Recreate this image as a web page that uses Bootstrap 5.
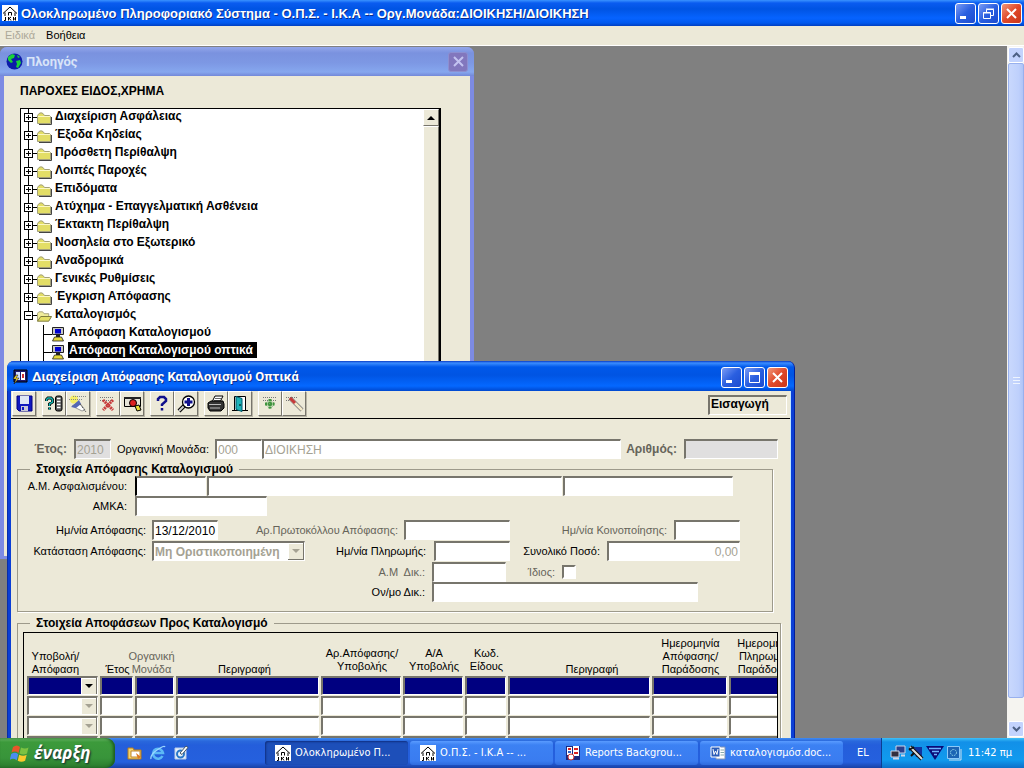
<!DOCTYPE html>
<html lang="el">
<head>
<meta charset="utf-8">
<meta name="viewport" content="width=device-width, initial-scale=1">
<title>Ολοκληρωμένο Πληροφοριακό Σύστημα</title>
<link href="https://cdn.jsdelivr.net/npm/bootstrap@5.3.0/dist/css/bootstrap.min.css" rel="stylesheet">
<style>
:root{--face:#ece9d8;--dark:#77756c}
body{font-family:"Liberation Sans",Arial,sans-serif;font-size:11px;line-height:13px;color:#000;background:#808080}
button{padding:0;border:0}
svg{display:block;flex:none}
.app-title{height:26px;padding:0 2px 0 2px;gap:3px;background:linear-gradient(#3a93ff 0,#0a5cf0 3px,#0054e3 9px,#0663ff 18px,#0058ee 23px,#003fc0 26px);color:#fff;font-size:13px;font-weight:700;text-shadow:1px 1px #0a2d8c}
.capbtn{width:21px;height:21px;border:1px solid #fff;border-radius:3px;background:linear-gradient(135deg,#7b9cf5,#2a5fe0 50%,#1c4bcf);display:flex;align-items:center;justify-content:center}
.capbtn.closer{background:linear-gradient(135deg,#f0977a,#e0492a 50%,#c8361a)}
.menubar{height:20px;background:var(--face);border-bottom:1px solid #fff;padding:0 5px 0 5px;gap:11px}
.menubar a{color:#000;text-decoration:none}
.menubar a.off{color:#aca899}
.workspace{background:#808080}
.vbar{width:17px;background:#f5f4f0;padding:1px 0 1px 1px}
.vbtn{width:16px;height:16px;border:1px solid #fff;border-radius:2px;background:#c3d3fd;display:flex;align-items:center;justify-content:center}
.vthumb{border:1px solid #98b0ee;border-radius:2px;background:linear-gradient(90deg,#c9d8fd,#bed0fc 70%,#b0c4f7);margin-bottom:23px}
.win{border-radius:7px 7px 0 0}
.nav-win{left:0;top:1px;width:474px;height:512px;background:#7d8be3;padding:0 4px 3px 4px}
.nav-title{height:29px;margin:0 -4px;padding:0 6px 0 6px;gap:3px;border-radius:7px 7px 0 0;background:linear-gradient(#93a6ea,#7a92df 6px,#7d98e4 16px,#86a7ee 25px,#7388d8 29px);color:#d8e4f8;font:700 13px/16px Roboto,sans-serif}
.nav-title .capbtn{border-color:#8d8fd0;background:#8277bd;width:20px;height:20px}
.nav-body{background:var(--face)}
.nav-head{font-size:12px;font-weight:700;padding:9px 16px 10px}
.tree{border:1px solid #000;border-right-width:2px;background:#fff;margin:0 29px 0 16px;font-size:12px;font-weight:700;line-height:16px}
.tree ul{padding:0;margin:0;list-style:none;background:linear-gradient(#000,#000) 7px 0/1px 100% no-repeat}
.tree li{height:18px;display:flex;align-items:center;padding-left:3px}
.tree li span{padding:0 1px;margin-left:2px;margin-top:-4px}
.tree li.leaf{padding-left:22px;border:0;background:linear-gradient(#000,#000) 22px 0/1px 100% no-repeat}
.tree .picked{background:#000;color:#fff;padding-right:4px}
.tbar{width:16px;background:#f3f1e7}
.rbtn{background:var(--face);border:1px solid;border-color:#fff var(--dark) var(--dark) #fff;display:flex;align-items:center;justify-content:center}
.tbar .rbtn{height:17px}
.form-win{left:7px;right:229px;top:315px;background:#0b3fd6;padding:0 4px 0 3px;border-left:1px solid #0a2ea8;border-right:1px solid #001f9c}
.form-title{height:30px;margin:0 -4px;padding:2px 6px 0 5px;gap:4px;border-radius:7px 7px 0 0;background:linear-gradient(#0a3cc4 0,#3b8dff 2px,#0058ea 6px,#0054e3 14px,#0468ff 25px,#0048cf 30px);color:#fff;font:700 13px/16px Roboto,sans-serif;text-shadow:1px 1px #0a2d8c}
.form-body{background:var(--face);border-right:1px solid #bfe6ff;margin-right:-1px}
.tools{height:28px;border-bottom:1px solid #000;padding:0 3px 0 1px}
.tool{width:24px;height:25px;background:var(--face);border:1px solid;border-color:#fff var(--dark) var(--dark) #fff;box-shadow:1px 1px #b8b5a6;display:flex;align-items:center;justify-content:center}
.mode{width:79px;height:20px;font-size:12px;font-weight:700;line-height:15px;padding-left:1px}
.sunk{border:solid;border-width:2px 1px 1px 2px;border-color:var(--dark) #fff #fff var(--dark);border-radius:0;background:#fff;height:20px;padding:0 1px;font-size:12px;line-height:14px;color:#000;outline:0;min-width:0;display:block;flex:none}
.sunk:disabled{opacity:1;color:#a5a293}
.row-f{display:flex;align-items:center;height:20px}
.row-f label{text-align:right;white-space:nowrap;flex:none}
.gray{color:#66645a}
fieldset.grp{border:1px solid #9d9a8b;box-shadow:1px 1px #fff;margin:4px 17px 0 6px;min-width:0}
.grp legend{float:none;width:auto;margin:0 0 0 12px;padding:0 6px;font-size:12px;font-weight:700;line-height:13px}
.w66{width:66px}.w71{width:71px}.w76{width:76px}
.l109{width:109px;margin-right:8px}.l128{width:128px;margin-right:6px}
.l407{width:407px;margin-right:7px}
.combo{appearance:none;background:url("data:image/svg+xml,%3Csvg xmlns='http://www.w3.org/2000/svg' width='16' height='17'%3E%3Cpath d='M0 0h16v17H0z' fill='%2377756c'/%3E%3Cpath d='M0 0h15v16H0z' fill='%23fff'/%3E%3Cpath d='M1 1h14v15H1z' fill='%23ece9d8'/%3E%3Cpath d='M4 6h8L8 10z' fill='%23a5a293'/%3E%3C/svg%3E") right 0 top 0 no-repeat #fff}
.combo.live{background-color:#000080;background-image:url("data:image/svg+xml,%3Csvg xmlns='http://www.w3.org/2000/svg' width='16' height='17'%3E%3Cpath d='M0 0h16v17H0z' fill='%2377756c'/%3E%3Cpath d='M0 0h15v16H0z' fill='%23fff'/%3E%3Cpath d='M1 1h14v15H1z' fill='%23ece9d8'/%3E%3Cpath d='M4 6h8L8 10z' fill='%23000'/%3E%3C/svg%3E")}
.tick{appearance:none;width:14px;height:14px;border:2px solid;border-color:var(--dark) #fff #fff var(--dark);background:#fff;margin:0}
.gridbox{border:1px solid #000;margin:2px 2px 0 5px;overflow:hidden}
.gridbox table{table-layout:fixed;width:777px;border-collapse:collapse;margin-left:3px}
.gridbox th{height:43px;padding:0;font-weight:400;text-align:center;vertical-align:bottom;white-space:nowrap}
.gridbox th.up{padding-bottom:3px}
.gridbox td{padding:0 2px 1px 0;height:20px}
.gridbox td>*{width:100%;height:19px}
.gridbox tr.cur .sunk{background-color:#000080;color:#fff}
.taskbar{height:30px;background:linear-gradient(#3f8cf3 0,#2a68dc 3px,#245edb 7px,#2560de 24px,#1941a5 30px);color:#fff;font:11px/14px "DejaVu Sans Condensed","DejaVu Sans",sans-serif}
.start{width:115px;border-radius:0 9px 9px 0;background:linear-gradient(#6cb86a 0,#3c9a3b 4px,#38943a 20px,#2a7a2c 30px);box-shadow:inset -2px 0 3px #1d5c20;color:#fff;font:italic 700 17px/20px "Open Sans",sans-serif;text-shadow:1px 1px 2px #123;padding-left:10px;gap:4px}
.task{height:24px;border-radius:3px;background:linear-gradient(#5a9bff,#3c81f3 4px,#3a7cf0 20px,#2f6bdd);color:#fff;padding-left:10px;gap:4px;margin-right:2px;flex:1 1 0;min-width:0;text-align:left;white-space:nowrap}
.task.on{background:#1d4fb9;box-shadow:inset 1px 1px 2px #0f2f80}
.tray{width:143px;background:linear-gradient(#3fc0f8 0,#1290e8 4px,#109aee 22px,#0d6fc8 30px);border-left:1px solid #0b3d91;padding:0 12px 0 8px;gap:2px}
</style>
</head>
<body>
<svg width="0" height="0" class="position-absolute">
<defs>
<symbol id="house" viewBox="0 0 16 16"><path fill="#fff" d="M0 0h16v16H0z"/><path d="M1 8.500 8 2l7 6.500M3 7.500V11M13 7.500V11M6.500 10.500V7.500h3v3" fill="none" stroke="#000"/><path d="M3.500 12v3.500H2M6.500 12v3.500M6.500 14 9 12M7.500 13.500 9 15.500M11.500 15.500V12M13.500 12v3.500M11.500 14h2" fill="none" stroke="#000"/></symbol>
<symbol id="folder" viewBox="0 0 15 13"><path d="M.5 11.500V3.500L2 1.500Q4 0 6 1.500l1.500 2h5l1 1v7z" fill="#e3de66" stroke="#a3a07a"/><path d="M1 4h12v1H1z" fill="#fbf8c4"/><path d="M2 12.500h12.500V5" fill="none" stroke="#444"/></symbol>
<symbol id="folder-open" viewBox="0 0 16 13"><path d="M.5 11.500V3L2 1.500h4l1.500 2h5v3" fill="#f0ec9a" stroke="#a3a07a"/><path d="M.5 11.500 4 6.500h11.500L12.500 11.500z" fill="#e3de66" stroke="#77753a"/></symbol>
<symbol id="plus" viewBox="0 0 13 18"><path d="M9 8.500h4" stroke="#000"/><rect x=".5" y="4.500" width="8" height="8" fill="#fff" stroke="#000"/><path d="M2 8.500h5M4.500 6v5" stroke="#000"/></symbol>
<symbol id="minus" viewBox="0 0 13 18"><path d="M9 8.500h4" stroke="#000"/><rect x=".5" y="4.500" width="8" height="8" fill="#fff" stroke="#000"/><path d="M2 8.500h5" stroke="#000"/></symbol>
<symbol id="pc" viewBox="0 0 21 16"><path d="M0 8.500h9" stroke="#000"/><path d="M9.500 1.500h11v7h-11z" fill="#c8c8c8" stroke="#222"/><path d="M12 3h6v4.500h-6z" fill="#0000d0"/><path d="M13 9h4v2h-4z" fill="#222"/><path d="M11.500 11h7l2 4h-11z" fill="#e4d83a" stroke="#222" stroke-width=".8"/></symbol>
<symbol id="min" viewBox="0 0 13 13"><path d="M1 9h6v3H1z" fill="#fff"/></symbol>
<symbol id="max" viewBox="0 0 13 13"><path d="M1.500 2.500h10v9h-10z" fill="none" stroke="#fff"/><path d="M1 1h11v3H1z" fill="#fff"/></symbol>
<symbol id="restore" viewBox="0 0 13 13"><path d="M4.500 5V2.500h7v6H9" fill="none" stroke="#fff"/><path d="M4 1.500h8v1H4z" fill="#fff"/><path d="M1.500 5.500h7v6h-7zM1 6h8" fill="none" stroke="#fff"/></symbol>
<symbol id="x" viewBox="0 0 13 13"><path d="m2 2 9 9M11 2l-9 9" stroke="currentColor" stroke-width="2"/></symbol>
</defs>
</svg>

<div class="d-flex flex-column vh-100 overflow-hidden">
  <header class="app-title d-flex align-items-center">
    <svg width="16" height="16"><use href="#house"/></svg>
    <span class="flex-grow-1 text-nowrap overflow-hidden">Ολοκληρωμένο Πληροφοριακό Σύστημα - Ο.Π.Σ. - Ι.Κ.Α -- Οργ.Μονάδα:ΔΙΟΙΚΗΣΗ/ΔΙΟΙΚΗΣΗ</span>
    <div class="d-flex text-white" style="gap:2px">
      <button class="capbtn" aria-label="Ελαχιστοποίηση"><svg width="13" height="13"><use href="#min"/></svg></button>
      <button class="capbtn" aria-label="Επαναφορά"><svg width="13" height="13"><use href="#restore"/></svg></button>
      <button class="capbtn closer text-white" aria-label="Κλείσιμο"><svg width="13" height="13"><use href="#x"/></svg></button>
    </div>
  </header>
  <nav class="menubar d-flex align-items-center"><a class="off" href="#">Ειδικά</a><a href="#">Βοήθεια</a></nav>

  <main class="d-flex flex-grow-1 overflow-hidden position-relative workspace">
    <section class="win nav-win position-absolute d-flex flex-column">
      <div class="nav-title d-flex align-items-center">
        <svg width="17" height="17" viewBox="0 0 17 17"><circle cx="8.500" cy="8.500" r="8" fill="#0c1ca8"/><path d="M2 4 6 1l3 1-1 3-3 1 2 3-2 1-3-3zM10 8l4-1 1 3-3 5-2-1 1-3zM11 2l3 2-2 1z" fill="#19d23a"/></svg>
        <span class="flex-grow-1">Πλοηγός</span>
        <button class="capbtn" aria-label="Κλείσιμο" style="color:#c3c3f0"><svg width="13" height="13"><use href="#x"/></svg></button>
      </div>
      <div class="nav-body flex-grow-1 d-flex flex-column">
        <div class="nav-head">ΠΑΡΟΧΕΣ ΕΙΔΟΣ,ΧΡΗΜΑ</div>
        <div class="tree flex-grow-1 d-flex">
          <ul class="flex-grow-1">
            <li><svg width="13" height="18"><use href="#plus"/></svg><svg width="15" height="13"><use href="#folder"/></svg><span>Διαχείριση Ασφάλειας</span></li>
            <li><svg width="13" height="18"><use href="#plus"/></svg><svg width="15" height="13"><use href="#folder"/></svg><span>Έξοδα Κηδείας</span></li>
            <li><svg width="13" height="18"><use href="#plus"/></svg><svg width="15" height="13"><use href="#folder"/></svg><span>Πρόσθετη Περίθαλψη</span></li>
            <li><svg width="13" height="18"><use href="#plus"/></svg><svg width="15" height="13"><use href="#folder"/></svg><span>Λοιπές Παροχές</span></li>
            <li><svg width="13" height="18"><use href="#plus"/></svg><svg width="15" height="13"><use href="#folder"/></svg><span>Επιδόματα</span></li>
            <li><svg width="13" height="18"><use href="#plus"/></svg><svg width="15" height="13"><use href="#folder"/></svg><span>Ατύχημα - Επαγγελματική Ασθένεια</span></li>
            <li><svg width="13" height="18"><use href="#plus"/></svg><svg width="15" height="13"><use href="#folder"/></svg><span>Έκτακτη Περίθαλψη</span></li>
            <li><svg width="13" height="18"><use href="#plus"/></svg><svg width="15" height="13"><use href="#folder"/></svg><span>Νοσηλεία στο Εξωτερικό</span></li>
            <li><svg width="13" height="18"><use href="#plus"/></svg><svg width="15" height="13"><use href="#folder"/></svg><span>Αναδρομικά</span></li>
            <li><svg width="13" height="18"><use href="#plus"/></svg><svg width="15" height="13"><use href="#folder"/></svg><span>Γενικές Ρυθμίσεις</span></li>
            <li><svg width="13" height="18"><use href="#plus"/></svg><svg width="15" height="13"><use href="#folder"/></svg><span>Έγκριση Απόφασης</span></li>
            <li><svg width="13" height="18"><use href="#minus"/></svg><svg width="15" height="13"><use href="#folder-open"/></svg><span>Καταλογισμός</span></li>
            <li class="leaf"><svg width="21" height="16"><use href="#pc"/></svg><span class="ms-1">Απόφαση Καταλογισμού</span></li>
            <li class="leaf"><svg width="21" height="16"><use href="#pc"/></svg><span class="ms-1 picked">Απόφαση Καταλογισμού οπτικά</span></li>
          </ul>
          <div class="tbar"><button class="rbtn w-100" aria-label="Επάνω"><svg width="8" height="4"><path d="M0 4h8L4 0z"/></svg></button><div class="rbtn h-100"></div></div>
        </div>
      </div>
    </section>

    <section class="win form-win position-absolute">
      <div class="form-title d-flex align-items-center">
        <svg width="16" height="16" viewBox="0 0 16 16"><path d="M2 1h13v12H2z" fill="#1a1a70" stroke="#000"/><path d="M4 3h4v8H4z" fill="#cfe0ff"/><path d="M9 3h4v8H9z" fill="#fff"/><path d="M10 5h2v4h-2z" fill="#c33"/><path d="m4 6-3 4h3l-2 5 5-6H4l2-3z" fill="#ffe53a" stroke="#000" stroke-width=".5"/></svg>
        <span class="flex-grow-1">Διαχείριση Απόφασης Καταλογισμού Οπτικά</span>
        <div class="d-flex text-white" style="gap:2px">
          <button class="capbtn" aria-label="Ελαχιστοποίηση"><svg width="13" height="13"><use href="#min"/></svg></button>
          <button class="capbtn" aria-label="Μεγιστοποίηση"><svg width="13" height="13"><use href="#max"/></svg></button>
          <button class="capbtn closer text-white" aria-label="Κλείσιμο"><svg width="13" height="13"><use href="#x"/></svg></button>
        </div>
      </div>
      <div class="form-body">
        <div class="tools d-flex align-items-start">
          <button class="tool" aria-label="Αποθήκευση"><svg width="17" height="17" viewBox="0 0 17 17"><path d="M1 1h15v15H3l-2-2z" fill="#1018c0" stroke="#000080"/><path d="M4 1h9v8H4z" fill="#dfe6f5"/><path d="M5 11h7v5H5z" fill="#c8c8d8"/><path d="M6 12h2v3H6z" fill="#1018c0"/></svg></button>
          <button class="tool" aria-label="Ερώτημα" style="margin-left:6px"><svg width="18" height="17" viewBox="0 0 18 17"><path d="M1.500 6V4.500L3 3h3l1.500 1.500V7L4.500 9v2M4.500 12.500v2" fill="none" stroke="#000" stroke-width="3"/><path d="M1.500 6V4.500L3 3h3l1.500 1.500V7L4.500 9v2M4.500 12.500v2" fill="none" stroke="#12b5b0" stroke-width="1.500"/><rect x="10.500" y="1" width="6.500" height="15" rx="2" fill="#555" stroke="#000"/><path d="M12 3.500h3.500M12 6.500h3.500M12 9.500h3.500M12 12.500h3.500" stroke="#fff" stroke-width="1.500"/></svg></button>
          <button class="tool" aria-label="Εκκαθάριση ερωτήματος"><svg width="20" height="18" viewBox="0 0 20 18"><circle cx="6" cy="4.500" r="4" fill="#f6ee66"/><path d="M1 4.500h14M5 1.500h13" stroke="#888" stroke-dasharray="1 1"/><path d="m4 11 7-4 6 8-3 1z" fill="#fff" stroke="#999"/><path d="m3 12 8-7 2 4-5 4z" fill="#5567b5"/><path d="m12 9 6 8" stroke="#555" stroke-dasharray="2 1"/></svg></button>
          <button class="tool" aria-label="Διαγραφή" style="margin-left:6px"><svg width="18" height="17" viewBox="0 0 18 17"><path d="M1 2.500h14M1 5.500h14" stroke="#777" stroke-dasharray="1 1"/><path d="m4 5 10 10M14 5 4 15" stroke="#c73a3a" stroke-width="3" stroke-dasharray="2 .6"/></svg></button>
          <button class="tool" aria-label="Λίστα τιμών"><svg width="19" height="17" viewBox="0 0 19 17"><path d="M1.500 2.500h16v9h-16z" fill="#e6e4d8" stroke="#000"/><path d="M1 2h17v2H1z" fill="#222"/><circle cx="10" cy="8" r="3.500" fill="#d22" stroke="#000"/><path d="m12 11 4-1 2 5-4 1z" fill="#eadf36" stroke="#000"/></svg></button>
          <button class="tool" aria-label="Βοήθεια" style="margin-left:6px"><svg width="14" height="17" viewBox="0 0 14 17"><path d="M3 6V4l2-2h4l2 2v2L7 9.500V11M7 13v2.500" fill="none" stroke="#10108c" stroke-width="2.500"/></svg></button>
          <button class="tool" aria-label="Αναζήτηση"><svg width="19" height="18" viewBox="0 0 19 18"><path d="m7 11-5 5" stroke="#000" stroke-width="4"/><path d="m7 11-5 5" stroke="#ccc" stroke-width="2"/><circle cx="11.500" cy="7" r="6" fill="#fff" stroke="#000" stroke-width="1.300"/><path d="M11.500 3v8M7.500 7h8" stroke="#10108c" stroke-width="3"/></svg></button>
          <button class="tool" aria-label="Εκτύπωση" style="margin-left:6px"><svg width="18" height="17" viewBox="0 0 18 17"><path d="m5 7 3-6h8l-3 6z" fill="#fff" stroke="#000"/><path d="M8 3.500h6M7 5.500h6" stroke="#666"/><path d="m1 8 3-2h12l1 3v4l-3 3H3l-2-3z" fill="#333" stroke="#000"/><path d="M2 9.500h12M3 13h10" stroke="#bbb"/></svg></button>
          <button class="tool" aria-label="Έξοδος"><svg width="18" height="17" viewBox="0 0 18 17"><path d="M3.500 1.500h11v14h-11z" fill="#fff" stroke="#000"/><path d="m5 1.500 6 2v13l-6-2z" fill="#1db3b8" stroke="#056"/><path d="M1 15.500h4M13 15.500h4" stroke="#000"/><path d="M9 9v2" stroke="#000"/></svg></button>
          <button class="tool" aria-label="Εισαγωγή εγγραφής" style="margin-left:6px"><svg width="18" height="17" viewBox="0 0 18 17"><path d="M2 2.500h14M2 5.500h14" stroke="#777" stroke-dasharray="1 1"/><path d="M9 4.500 14 9l-5 5-5-5z" fill="none" stroke="#7db87d" stroke-dasharray="1 1"/><path d="M9 4v10M4 9h10" stroke="#3f943f" stroke-width="3" stroke-dasharray="2 .5"/></svg></button>
          <button class="tool" aria-label="Διαγραφή εγγραφής"><svg width="19" height="17" viewBox="0 0 19 17"><path d="M1 2.500h12M1 5.500h8" stroke="#777" stroke-dasharray="1 1"/><path d="m5 3 12 12" stroke="#777" stroke-width="4"/><path d="m6 4 11 11" stroke="#f3e9c8" stroke-width="2.500"/><path d="m5 3 5 5" stroke="#c73a3a" stroke-width="3"/></svg></button>
          <output class="sunk mode ms-auto mt-1" style="background:var(--face)">Εισαγωγή</output>
        </div>
        <form>
          <div class="row-f" style="margin:20px 12px 0 22px">
            <label class="gray fw-bold" for="yr" style="width:34px;font-size:12px;margin-right:7px">Έτος:</label>
            <input id="yr" class="sunk" disabled value="2010" style="width:37px;background:#e0dfdf">
            <label for="org" style="width:98px;margin-right:6px">Οργανική Μονάδα:</label>
            <input id="org" class="sunk" disabled value="000" style="width:47px">
            <input aria-label="Ονομασία μονάδας" class="sunk flex-grow-1" disabled value="ΔΙΟΙΚΗΣΗ">
            <label class="gray fw-bold" for="num" style="width:56px;font-size:12px;margin-right:7px">Αριθμός:</label>
            <input id="num" class="sunk" disabled style="width:94px;background:#e0dfdf">
          </div>
          <fieldset class="grp" style="padding-bottom:9px">
            <legend>Στοιχεία Απόφασης Καταλογισμού</legend>
            <div class="row-f" style="padding-right:39px;gap:1px">
              <label class="l109" style="margin-right:7px" for="am">Α.Μ. Ασφαλισμένου:</label>
              <input id="am" class="sunk w71" style="border-left-color:#000">
              <input aria-label="Επώνυμο" class="sunk flex-grow-1">
              <input aria-label="Όνομα" class="sunk" style="width:170px">
            </div>
            <div class="row-f"><label class="l109" for="amka">ΑΜΚΑ:</label><input id="amka" class="sunk" style="width:132px"></div>
            <div class="row-f" style="margin-top:4px">
              <label class="l128" for="d1">Ημ/νία Απόφασης:</label><input id="d1" class="sunk w66" value="13/12/2010">
              <label class="gray" for="prot" style="width:180px;margin-right:6px">Αρ.Πρωτοκόλλου Απόφασης:</label><input id="prot" class="sunk" style="width:106px">
              <label class="gray" for="d2" style="width:157px;margin-right:7px">Ημ/νία Κοινοποίησης:</label><input id="d2" class="sunk w66">
            </div>
            <div class="row-f" style="margin-top:1px">
              <label class="l128" for="st">Κατάσταση Απόφασης:</label>
              <select id="st" class="sunk combo fw-bold" disabled style="width:153px;font-size:12px"><option>Μη Οριστικοποιημένη</option></select>
              <label for="d3" style="width:121px;margin-right:8px">Ημ/νία Πληρωμής:</label><input id="d3" class="sunk w76">
              <label for="tot" style="width:90px;margin-right:7px">Συνολικό Ποσό:</label><input id="tot" class="sunk text-end" disabled value="0,00" style="width:133px">
            </div>
            <div class="row-f" style="margin-top:1px">
              <label class="l407 gray" for="amd">Α.Μ&nbsp; Δικ.:</label><input id="amd" class="sunk" style="width:74px">
              <label class="gray" for="same" style="width:49px;margin-right:7px">Ίδιος:</label><input id="same" class="tick" type="checkbox">
            </div>
            <div class="row-f"><label class="l407" for="ond">Ον/μο Δικ.:</label><input id="ond" class="sunk" style="width:266px"></div>
          </fieldset>
          <fieldset class="grp" style="margin-top:5px;margin-right:9px">
            <legend>Στοιχεία Αποφάσεων Προς Καταλογισμό</legend>
            <div class="gridbox">
              <table>
                <colgroup><col style="width:73px"><col style="width:35px"><col style="width:41px"><col style="width:145px"><col style="width:82px"><col style="width:62px"><col style="width:43px"><col style="width:144px"><col style="width:77px"><col style="width:75px"></colgroup>
                <thead><tr><th><div class="me-3">Υποβολή/<br>Απόφαση</div></th><th>Έτος</th><th class="gray"><div style="margin:0 0 0 -8px">Οργανική<br>Μονάδα</div></th><th><div class="me-2">Περιγραφή</div></th><th class="up">Αρ.Απόφασης/<br>Υποβολής</th><th class="up">Α/Α<br>Υποβολής</th><th class="up">Κωδ.<br>Είδους</th><th><div class="ms-4">Περιγραφή</div></th><th>Ημερομηνία<br>Απόφασης/<br>Παράδοσης</th><th>Ημερομηνία<br>Πληρωμής/<br>Παράδοσης</th></tr></thead>
                <tbody id="lines"></tbody>
              </table>
            </div>
          </fieldset>
        </form>
      </div>
    </section>

    <div class="vbar ms-auto d-flex flex-column">
      <button class="vbtn" aria-label="Επάνω"><svg width="9" height="6"><path d="m1 5 3.500-3.500L8 5" fill="none" stroke="#4d6185" stroke-width="2"/></svg></button>
      <div class="vthumb flex-grow-1 d-flex align-items-center justify-content-center"><svg width="7" height="8"><path d="M0 .5h7M0 3.500h7M0 6.500h7" stroke="#eef4fe"/></svg></div>
      <button class="vbtn" aria-label="Κάτω"><svg width="9" height="6"><path d="m1 1 3.500 3.500L8 1" fill="none" stroke="#4d6185" stroke-width="2"/></svg></button>
    </div>
  </main>

  <footer class="taskbar d-flex align-items-stretch">
    <button class="start d-flex align-items-center"><svg width="20" height="19" viewBox="0 0 20 19"><path d="M3 3q4-3 7 0L8.500 9Q5 6.500 1.500 8.500z" fill="#e8562a"/><path d="M11 3.500q4 2 7.500 0L17 9.500q-3.500 2-7.500 0z" fill="#7cc242"/><path d="M1.200 10q4-2.500 7 .3l-1.500 6q-3.500-2.600-7-.5z" fill="#4a8df0"/><path d="M9.200 10.800q4 2 7.500 0l-1.600 6q-3.600 2-7.400 0z" fill="#fbc92c"/></svg>έναρξη</button>
    <div class="d-flex align-items-center" style="width:150px;padding-left:12px;gap:7px">
      <svg width="16" height="16" viewBox="0 0 16 16"><path d="M1 3h5l1 2h7v9H1z" fill="#f5d36b" stroke="#b47a1e"/><path d="M4 6h9v6H4z" fill="#fff" stroke="#c08830"/><path d="m9 8 5 4-3 2z" fill="#e07a20"/></svg>
      <svg width="16" height="16" viewBox="0 0 16 16"><path d="M12.500 11A5 5 0 1 1 13 8H4" fill="none" stroke="#5cb8f5" stroke-width="2.500"/><path d="M1 14Q0 10 7 5t8-3" fill="none" stroke="#9ad6ff" stroke-width="1.300"/></svg>
      <svg width="16" height="16" viewBox="0 0 16 16"><path d="M2 3h11v11H2z" fill="#e9f0fa" stroke="#b8cce8"/><circle cx="7.500" cy="9" r="3.500" fill="none" stroke="#2a78c8" stroke-width="2"/><path d="m7 8 6-7 2 1.500-6 7z" fill="#fff" stroke="#456"/></svg>
    </div>
    <div class="d-flex align-items-center flex-grow-1" style="min-width:0">
      <button class="task on d-flex align-items-center"><svg width="16" height="16"><use href="#house"/></svg>Ολοκληρωμένο Π...</button>
      <button class="task d-flex align-items-center"><svg width="16" height="16"><use href="#house"/></svg>Ο.Π.Σ. - Ι.Κ.Α -- ...</button>
      <button class="task d-flex align-items-center"><svg width="16" height="16" viewBox="0 0 16 16"><path d="M1 1h14v14H1z" fill="#1b2a80"/><path d="M2 2h5v8H2zM8 1h6v10H8z" fill="#fff"/><path d="M3 3h3v2H3zM9 3h4v2H9zM9 7h4v2H9z" fill="#d22"/><path d="M3 6h3v2H3z" fill="#36c"/><circle cx="6" cy="12" r="3" fill="#fff" stroke="#c33"/></svg>Reports Backgrou...</button>
      <button class="task d-flex align-items-center"><svg width="16" height="16" viewBox="0 0 16 16"><path d="M6 2h9v12H6z" fill="#fff" stroke="#7f93b8"/><path d="M10 5h4M10 7.500h4M10 10h4" stroke="#8aa"/><path d="M1 2h9v10H1z" fill="#2b5cb8" stroke="#fff"/><path d="m3 4 1 5.500L5.500 6 7 9.500 8 4" fill="none" stroke="#fff"/></svg>καταλογισμόσ.doc...</button>
    </div>
    <div class="d-flex align-items-center justify-content-center" style="width:36px">EL</div>
    <div class="tray d-flex align-items-center">
      <svg width="16" height="16" viewBox="0 0 16 16"><path d="M6 1h9v7H6z" fill="#2a3f8c" stroke="#cdd6e8"/><path d="M1 6h8v6H1z" fill="#34303f" stroke="#cdd6e8"/><path d="M3 13.500h6M11 10.500h4" stroke="#cdd6e8" stroke-width="2"/></svg>
      <svg width="16" height="16" viewBox="0 0 16 16"><path d="M6 2h8v10H8z" fill="#1033a0"/><path d="m2 2 12 12" stroke="#111" stroke-width="4"/><path d="m2 2 12 12" stroke="#ddd" stroke-width="2"/><path d="m3 11 3-3M1 5l5-3" stroke="#111" stroke-width="2"/></svg>
      <svg width="18" height="16" viewBox="0 0 18 16"><path d="M0 1h18L9 15z" fill="#0a0a78"/><path d="M3 3.500h12M6 6.500h7M8 9.500h3" stroke="#6cb4ff" stroke-width="1.500"/></svg>
      <svg width="16" height="16" viewBox="0 0 16 16"><path d="M1.500 1.500h12v12h-12z" fill="#1c64b4" stroke="#8cc8f8"/><circle cx="7.500" cy="7.500" r="3" fill="none" stroke="#9de" stroke-dasharray="1.500 1"/><path d="M3 15h12V4" fill="none" stroke="#cde"/></svg>
      <span class="ms-auto text-nowrap">11:42 πμ</span>
    </div>
  </footer>
</div>
<script src="https://cdn.jsdelivr.net/npm/bootstrap@5.3.0/dist/js/bootstrap.bundle.min.js"></script>
<script>
const names = ['Έτος','Οργανική Μονάδα','Περιγραφή','Αρ. Απόφασης','Α/Α Υποβολής','Κωδ. Είδους','Περιγραφή είδους','Ημερομηνία Απόφασης','Ημερομηνία Πληρωμής'];
document.getElementById('lines').innerHTML = [0,1,2,3,4].map(i =>
  `<tr class="${i ? '' : 'cur'}"><td><select aria-label="Υποβολή/Απόφαση" class="sunk combo ${i ? '' : 'live'}"></select></td>` +
  names.map(n => `<td><input aria-label="${n}" class="sunk"></td>`).join('') + '</tr>').join('');
</script>
</body>
</html>
